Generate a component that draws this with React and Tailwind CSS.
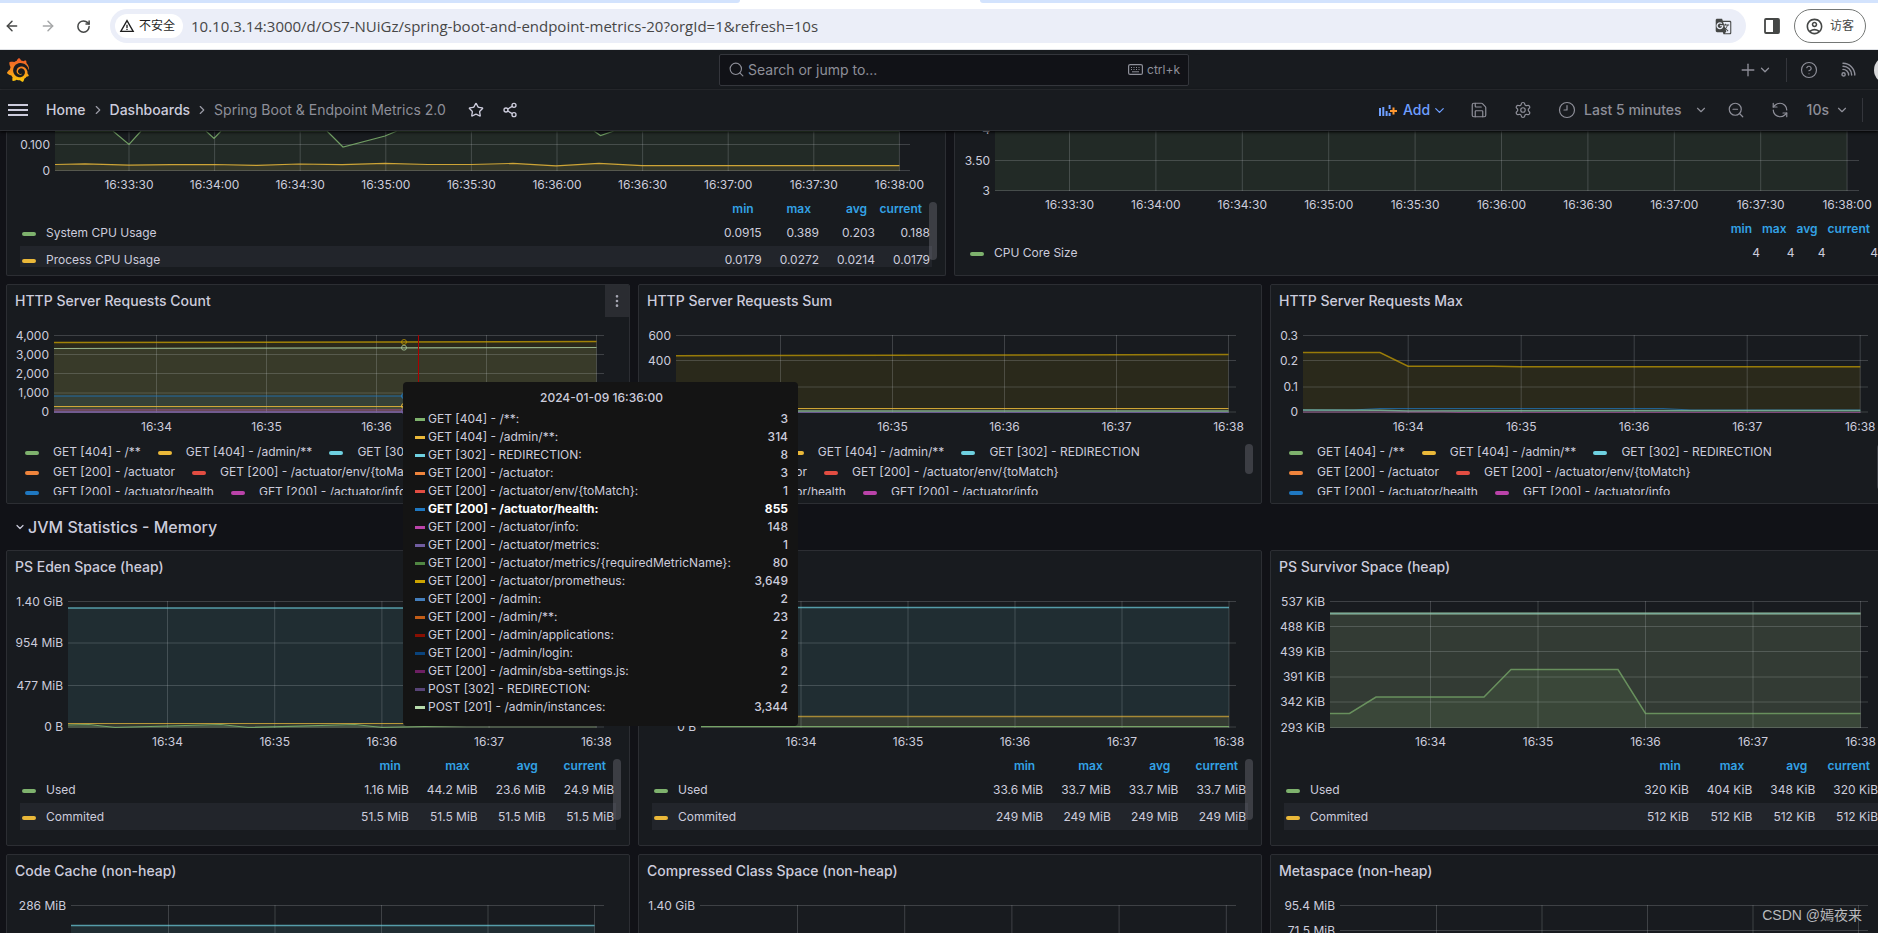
import React from "react";
import { ArrowLeft, ArrowRight, RotateCw, ChevronDown, ChevronRight, Star, Share2, Plus, Save, Settings, Clock3, ZoomOut, RefreshCw, Search, CircleHelp, EllipsisVertical } from "lucide-react";
import { SiGrafana } from "react-icons/si";
import { MdGTranslate, MdOutlineAccountCircle, MdWarningAmber } from "react-icons/md";

const GREEN = "#7eb26d";
const ORANGE = "#eab839";
const CYAN = "#6ed0e0";
const OCHRE = "#cca300";
const GRID = "rgba(214,220,224,0.2)";

const minutes = ["16:34", "16:35", "16:36", "16:37", "16:38"];
const halfMinutes = ["16:33:30", "16:34:00", "16:34:30", "16:35:00", "16:35:30", "16:36:00", "16:36:30", "16:37:00", "16:37:30", "16:38:00"];

const legendSeries = [
  [["#7eb26d", "GET [404] - /**"], ["#eab839", "GET [404] - /admin/**"], ["#6ed0e0", "GET [302] - REDIRECTION"]],
  [["#ef843c", "GET [200] - /actuator"], ["#e24d42", "GET [200] - /actuator/env/{toMatch}"]],
  [["#1f78c1", "GET [200] - /actuator/health"], ["#ba43a9", "GET [200] - /actuator/info"]],
];

const tooltipRows = [
  ["#7eb26d", "GET [404] - /**:", "3"],
  ["#eab839", "GET [404] - /admin/**:", "314"],
  ["#6ed0e0", "GET [302] - REDIRECTION:", "8"],
  ["#ef843c", "GET [200] - /actuator:", "3"],
  ["#e24d42", "GET [200] - /actuator/env/{toMatch}:", "1"],
  ["#1f78c1", "GET [200] - /actuator/health:", "855", true],
  ["#ba43a9", "GET [200] - /actuator/info:", "148"],
  ["#705da0", "GET [200] - /actuator/metrics:", "1"],
  ["#508642", "GET [200] - /actuator/metrics/{requiredMetricName}:", "80"],
  ["#cca300", "GET [200] - /actuator/prometheus:", "3,649"],
  ["#447ebc", "GET [200] - /admin:", "2"],
  ["#c15c17", "GET [200] - /admin/**:", "23"],
  ["#890f02", "GET [200] - /admin/applications:", "2"],
  ["#0a437c", "GET [200] - /admin/login:", "8"],
  ["#6d1f62", "GET [200] - /admin/sba-settings.js:", "2"],
  ["#584477", "POST [302] - REDIRECTION:", "2"],
  ["#b7dbab", "POST [201] - /admin/instances:", "3,344"],
];

/* Horizontal line series from the plot's left edge to the last tick */
const flat = (y, end) => [[0, y], [end, y]];

function Chart({ labelWidth, right = "pr-[25px]", w, h, yTicks, xStart, xStep, xLabels, series, children }) {
  const xs = xLabels.map((_, i) => xStart + i * xStep);
  return (
    <div className={`flex ${right}`}>
      <div className={`relative shrink-0 ${labelWidth}`}>
        {yTicks.map(([label, y]) => (
          <span key={label} className="absolute right-[5px] -translate-y-1/2 whitespace-nowrap text-xs leading-4" style={{ top: y }}>
            {label}
          </span>
        ))}
      </div>
      <div className="min-w-0 flex-1">
        <svg className="block w-full overflow-visible" height={h} viewBox={`0 0 ${w} ${h}`} preserveAspectRatio="none">
          {series.map((s, i) => {
            const line = s.points.map((p) => p.join(",")).join(" ");
            const last = s.points[s.points.length - 1][0];
            return <polygon key={i} points={`0,${h} ${line} ${last},${h}`} fill={s.color} fillOpacity={s.fill || 0.1} />;
          })}
          {yTicks.map(([label, y]) => y >= 0 && (
            <line key={label} x1="0" x2={w} y1={y} y2={y} stroke={GRID} />
          ))}
          {xs.map((x) => (
            <line key={x} x1={x} x2={x} y1="0" y2={h} stroke={GRID} />
          ))}
          {series.map((s, i) => (
            <polyline key={i} points={s.points.map((p) => p.join(",")).join(" ")} fill="none" stroke={s.color} strokeOpacity={s.opacity || 0.85} strokeWidth={s.width || 1.2} />
          ))}
          {children}
        </svg>
        <div className="relative h-[27px]">
          {xLabels.map((label, i) => (
            <span key={label} className="absolute top-[6px] -translate-x-1/2 text-xs leading-4" style={{ left: `${(xs[i] / w) * 100}%` }}>
              {label}
            </span>
          ))}
        </div>
      </div>
    </div>
  );
}

function Swatch({ color }) {
  return <span className="mt-0.5 block h-1 w-3.5 shrink-0 rounded-sm" style={{ backgroundColor: color }} />;
}

function LegendTable({ rows }) {
  return (
    <div className="px-[13px]">
      <table className="w-full text-xs">
        <thead>
          <tr className="h-[21px] text-[#33a2e5]">
            <th className="w-full" aria-label="series" />
            {["min", "max", "avg", "current"].map((t) => (
              <th key={t} className="py-0 pr-[10px] text-right font-semibold">{t}</th>
            ))}
          </tr>
        </thead>
        <tbody>
          {rows.map(([color, name, ...values], i) => (
            <tr key={name} className={i % 2 ? "h-[27px] bg-[#22252b]" : "h-[27px]"}>
              <td className="pl-[2px]">
                <div className="flex items-center gap-2.5">
                  <Swatch color={color} />
                  <span>{name}</span>
                </div>
              </td>
              {values.map((v, j) => (
                <td key={j} className="whitespace-nowrap pl-4 pr-[2px] text-right">{v}</td>
              ))}
            </tr>
          ))}
        </tbody>
      </table>
    </div>
  );
}

function LegendList() {
  return (
    <ul className="mt-[2px] h-[53px] overflow-hidden pl-[18px] text-xs">
      {legendSeries.map((row, i) => (
        <li key={i} className="flex h-5 items-center gap-[17px]">
          {row.map(([color, name]) => (
            <span key={name} className="flex items-center gap-3.5 whitespace-nowrap">
              <Swatch color={color} />
              {name}
            </span>
          ))}
        </li>
      ))}
    </ul>
  );
}

function ScrollThumb({ place }) {
  return <div className={`absolute right-2 w-2 rounded-full bg-[#ccccdc]/20 ${place}`} />;
}

function Panel({ title, menu, className, children }) {
  return (
    <section className={`relative overflow-hidden rounded-xs border border-[#2c2e33] bg-[#181b1f] ${className}`}>
      {title && (
        <header className="mb-[18px] flex h-8 items-center justify-between pl-2">
          <h2 className="text-sm font-medium">{title}</h2>
          {menu && (
            <button aria-label="Panel menu" className="flex h-8 w-6 items-center justify-center bg-[#2a2c31] text-[#a5a6b2]">
              <EllipsisVertical size={16} />
            </button>
          )}
        </header>
      )}
      {children}
    </section>
  );
}

function BrowserBar() {
  return (
    <div className="shrink-0 bg-white text-[#454746]">
      <div className="flex h-[3px] bg-white">
        <div className="w-[740px] rounded-br-md bg-[#d3e3fd]" />
        <div className="w-[240px]" />
        <div className="flex-1 rounded-bl-md bg-[#d3e3fd]" />
      </div>
      <div className="flex h-[47px] items-center border-b border-[#dfe1e5] pr-3">
        <div className="flex w-[110px] items-center gap-5 pl-1">
          <button aria-label="Back"><ArrowLeft size={16} strokeWidth={2.2} /></button>
          <button aria-label="Forward" className="text-[#a5a7a8]"><ArrowRight size={16} strokeWidth={2.2} /></button>
          <button aria-label="Reload"><RotateCw size={15} strokeWidth={2.4} /></button>
        </div>
        <div className="flex h-[34px] flex-1 items-center rounded-full bg-[#ebeef8] pl-[5px] pr-3.5">
          <span className="flex h-6 w-[68px] shrink-0 items-center gap-1 rounded-full bg-white pl-1 font-['Inter','Noto_Sans_CJK_SC',sans-serif] text-xs text-[#1f1f1f]">
            <MdWarningAmber size={16} />不安全
          </span>
          <input aria-label="Address" readOnly defaultValue="10.10.3.14:3000/d/OS7-NUiGz/spring-boot-and-endpoint-metrics-20?orgId=1&refresh=10s" className="min-w-0 flex-1 bg-transparent pl-2 font-['Open_Sans',sans-serif] text-[15px] leading-5 text-[#474747] outline-none" />
          <button aria-label="Translate"><MdGTranslate size={17} /></button>
        </div>
        <button aria-label="Side panel" className="ml-[18px] mr-[14px]">
          <svg width="16" height="16" viewBox="0 0 16 16"><rect x="1" y="1" width="14" height="14" rx="1" fill="none" stroke="#454746" strokeWidth="1.8" /><rect x="9" y="1" width="6" height="14" fill="#454746" /></svg>
        </button>
        <button className="flex h-[34px] w-[72px] items-center gap-1.5 rounded-full border border-[#747775] pl-2.5 font-['Inter','Noto_Sans_CJK_SC',sans-serif] text-xs">
          <MdOutlineAccountCircle size={19} />访客
        </button>
      </div>
    </div>
  );
}

function TopBar() {
  return (
    <div className="relative flex h-10 shrink-0 items-center justify-center border-b border-[#2c2e33] bg-[#181b1f] text-[#8e8f99]">
      <svg width="0" height="0" className="absolute">
        <defs>
          <linearGradient id="flame" x1="0" y1="0" x2="0" y2="1">
            <stop offset="0" stopColor="#f05a28" />
            <stop offset="0.5" stopColor="#f58a1f" />
            <stop offset="1" stopColor="#fbca0a" />
          </linearGradient>
        </defs>
      </svg>
      <div className="flex flex-1 items-center pl-1.5">
        <a href="#home" aria-label="Grafana"><SiGrafana size={24} fill="url(#flame)" /></a>
      </div>
      <label className="flex h-8 w-[470px] items-center rounded-xs border border-[#34363c] bg-[#111217] px-2">
        <Search size={17} strokeWidth={1.6} />
        <input aria-label="Search or jump to" placeholder="Search or jump to..." className="ml-[3px] min-w-0 flex-1 bg-transparent text-sm outline-none placeholder:text-[#8e8f99]" />
        <svg width="15" height="11" viewBox="0 0 15 11" fill="none" stroke="currentColor">
          <rect x="0.6" y="0.6" width="13.8" height="9.8" rx="1.5" strokeWidth="1.2" />
          <path d="M3 3.5h1M5.5 3.5h1M8 3.5h1M10.5 3.5h1M3 5.5h1M5.5 5.5h1M8 5.5h1M10.5 5.5h1M4 7.8h7" />
        </svg>
        <span className="ml-1 text-xs">ctrl+k</span>
      </label>
      <div className="-mr-6 flex flex-1 items-center justify-end">
        <button aria-label="New" className="flex items-center"><Plus size={20} strokeWidth={1.6} /><ChevronDown size={14} strokeWidth={2.2} /></button>
        <span className="ml-[14px] h-6 border-l border-[#34363c]" />
        <button aria-label="Help" className="ml-[13px]"><CircleHelp size={18} strokeWidth={1.6} /></button>
        <button aria-label="News" className="ml-[23px]">
          <svg width="15" height="15" viewBox="0 0 15 15" fill="none" stroke="currentColor" strokeWidth="1.4" strokeLinecap="round">
            <circle cx="2.6" cy="12.4" r="1.6" />
            <path d="M2 7.4a5.6 5.6 0 0 1 5.6 5.6M2 4.3a8.7 8.7 0 0 1 8.7 8.7M2 1.2A11.8 11.8 0 0 1 13.8 13" />
          </svg>
        </button>
        <span className="ml-[18px] size-7 rounded-full bg-[#d8d9da]" />
      </div>
    </div>
  );
}

function NavBar() {
  return (
    <nav className="z-10 flex h-[41px] shrink-0 items-center border-b border-[#2c2e33] bg-[#181b1f] pl-2 text-sm shadow-[0_1px_3px_#000]">
      <button aria-label="Menu">
        <svg width="20" height="14" viewBox="0 0 20 14" stroke="#ccccdc" strokeWidth="2"><path d="M0 2h20M0 7h20M0 12h20" /></svg>
      </button>
      <a href="#home" className="ml-[18px] font-medium">Home</a>
      <ChevronRight size={14} className="mx-[5px] text-[#9a9ba6]" />
      <a href="#dashboards" className="font-medium">Dashboards</a>
      <ChevronRight size={14} className="mx-[5px] text-[#9a9ba6]" />
      <span className="text-[#8e8f99]">Spring Boot &amp; Endpoint Metrics 2.0</span>
      <button aria-label="Mark as favorite" className="ml-[22px]"><Star size={16} /></button>
      <button aria-label="Share" className="ml-[18px]"><Share2 size={16} /></button>
      <div className="-mr-1 ml-auto flex items-center font-medium text-[#8e8f99]">
        <button className="flex items-center text-[#6e9fff]">
          <svg width="18" height="13" viewBox="0 0 18 13" fill="#6e9fff">
            <path d="M0 4h2v8H0zM3.3 3h2v9h-2zM6.6 7h2v5h-2zM9.6 1h2v4h-2zM9.6 9h2v3h-2z" />
            <path d="M13.5 3.5h2V6H18v2h-2.5v2.5h-2V8H11V6h2.500z" fill="#ff9830" />
          </svg>
          <span className="ml-1.5">Add</span>
          <ChevronDown size={15} className="ml-[2px]" />
        </button>
        <button aria-label="Save dashboard" className="ml-[23px]"><Save size={18} strokeWidth={1.6} /></button>
        <button aria-label="Dashboard settings" className="ml-[26px]"><Settings size={18} strokeWidth={1.6} /></button>
        <button className="ml-[26px] flex items-center"><Clock3 size={18} strokeWidth={1.6} className="-scale-x-100" /><span className="ml-2">Last 5 minutes</span><ChevronDown size={14} className="ml-3" /></button>
        <button aria-label="Zoom out" className="ml-[19px]"><ZoomOut size={18} strokeWidth={1.6} /></button>
        <button aria-label="Refresh" className="ml-[26px]"><RefreshCw size={18} strokeWidth={1.6} className="-scale-x-100" /></button>
        <button className="ml-[18px] flex items-center">10s<ChevronDown size={14} className="ml-[6px]" /></button>
        <span className="ml-[13px] h-6 w-5 border-l border-[#34363c]" />
      </div>
    </nav>
  );
}

function Tooltip() {
  return (
    <div role="tooltip" className="absolute left-[403px] top-[251px] z-20 h-[344px] w-[395px] rounded-sm bg-[#141414] pl-3 pr-2.5 pt-[7px] text-xs">
      <p className="mb-1 text-center font-medium leading-[17px]">2024-01-09 16:36:00</p>
      <table className="w-full">
        <tbody>
          {tooltipRows.map(([color, name, value, active]) => (
            <tr key={name} className={active ? "h-[18px] font-bold text-white" : "h-[18px]"}>
              <td>
                <div className="flex items-center gap-[3px] leading-[18px]">
                  <span className="h-[3px] w-2.5" style={{ backgroundColor: color }} />
                  {name}
                </div>
              </td>
              <td className={active ? "text-right leading-[18px]" : "text-right font-medium leading-[18px]"}>{value}</td>
            </tr>
          ))}
        </tbody>
      </table>
    </div>
  );
}

const requestScale = (labels) => labels.map((l, i) => [l, [0.5, 25.5, 52, 77][i]]);

export default function App() {
  return (
    <div className="flex h-screen flex-col overflow-hidden bg-[#111217] font-['Inter',sans-serif] text-[#ccccdc]">
      <BrowserBar />
      <TopBar />
      <NavBar />
      <main className="relative -mr-4 flex min-h-0 flex-1 flex-col overflow-hidden pl-1.5">
        <div className="grid h-[145px] shrink-0 grid-cols-2 gap-2">
          <Panel className="border-t-0">
            <Chart
              labelWidth="w-[48px]" right="pr-[35px]" w={855} h={40} xStart={74} xStep={85.6} xLabels={halfMinutes}
              yTicks={[["0.100", 13.5], ["0", 39.5]]}
              series={[
                { color: GREEN, points: [[0, 0], [58, 0], [74, 13.5], [86, 0], [151, 0], [159, 7.5], [166, 0], [272, 0], [288, 16], [330, 5], [342, 0], [539, 0], [545.5, 4.5], [559, 0], [844.4, 0]] },
                { color: ORANGE, points: [[0, 33.5], [30, 32.8], [74, 34.2], [116, 33.7], [159, 33.5], [202, 34.4], [244, 33], [287, 33.7], [330, 32.4], [373, 33.5], [416, 33.5], [458, 32.4], [501, 34.8], [544, 32.4], [587, 34.6], [844.4, 34.6]] },
              ]}
            />
            <div className="h-[69px] overflow-hidden">
              <LegendTable rows={[[GREEN, "System CPU Usage", "0.0915", "0.389", "0.203", "0.188"], [ORANGE, "Process CPU Usage", "0.0179", "0.0272", "0.0214", "0.0179"]]} />
            </div>
            <ScrollThumb place="top-[71px] h-[58px]" />
          </Panel>
          <Panel className="border-t-0">
            <Chart
              labelWidth="w-[40px]" right="pr-[34px]" w={864} h={60} xStart={74.5} xStep={86.4} xLabels={halfMinutes}
              yTicks={[["4", -1], ["3.50", 29.5], ["3", 59.5]]}
              series={[{ color: GREEN, points: [[0, -2], [852, -2]] }]}
            />
            <LegendTable rows={[[GREEN, "CPU Core Size", "4", "4", "4", "4"]]} />
          </Panel>
        </div>

        <div className="mt-2 grid h-[220px] shrink-0 grid-cols-3 gap-2">
          <Panel title="HTTP Server Requests Count" menu>
            <Chart
              labelWidth="w-[47px]" w={550} h={78} xStart={102.5} xStep={110} xLabels={minutes}
              yTicks={[["4,000", 0.5], ["3,000", 19.5], ["2,000", 38.5], ["1,000", 58], ["0", 77]]}
              series={[
                { color: OCHRE, points: [[0, 7.5], [542.5, 6.5]], width: 1.5, opacity: 0.75 },
                { color: "#b7dbab", points: [[0, 13.5], [542.5, 12.5]], opacity: 0.75 },
                { color: "#1f78c1", points: flat(61, 542.5), width: 1.5, opacity: 0.55 },
                { color: ORANGE, points: flat(71.5, 542.5) },
                { color: "#ba43a9", points: flat(74.5, 542.5), fill: 0.3, opacity: 0.3 },
                { color: "#705da0", points: flat(77, 542.5), width: 2, opacity: 0.7 },
              ]}
            >
              <line x1="364.5" x2="364.5" y1="0" y2="78" stroke="#aa0000" />
              <circle cx="350" cy="7" r="2.5" fill="none" stroke={OCHRE} strokeOpacity="0.7" />
              <circle cx="350" cy="12.7" r="2.5" fill="none" stroke="#b7dbab" strokeOpacity="0.7" />
              <circle cx="350" cy="61" r="2.5" fill="none" stroke="#1f78c1" />
              <circle cx="350" cy="71" r="2.5" fill="none" stroke={ORANGE} />
              <circle cx="350" cy="76" r="2.5" fill="none" stroke="#705da0" />
            </Chart>
            <LegendList />
          </Panel>
          <Panel title="HTTP Server Requests Sum">
            <Chart
              labelWidth="w-[37px]" w={560} h={78} xStart={104.5} xStep={112} xLabels={minutes}
              yTicks={requestScale(["600", "400", "200", "0"])}
              series={[
                { color: OCHRE, points: [[0, 20.7], [552.5, 19.5]], opacity: 0.7, width: 1.5 },
                { color: ORANGE, points: flat(73.5, 552.5) },
                { color: "#7fb59a", points: flat(76, 552.5), width: 1.5 },
                { color: "#705da0", points: flat(77.5, 552.5) },
              ]}
            />
            <LegendList />
            <ScrollThumb place="top-[159px] h-[30px]" />
          </Panel>
          <Panel title="HTTP Server Requests Max">
            <Chart
              labelWidth="w-[32px]" w={565} h={78} xStart={105.2} xStep={113} xLabels={minutes}
              yTicks={requestScale(["0.3", "0.2", "0.1", "0"])}
              series={[
                { color: OCHRE, points: [[0, 17.5], [77, 17.5], [105, 31.2], [190, 31.2], [218, 31.8], [557.3, 31.8]], opacity: 0.7, width: 1.5 },
                { color: "#1f78c1", points: [[0, 75], [50, 75], [77, 73.5], [360, 73.5], [388, 75], [557.3, 75]], opacity: 0.7 },
                { color: "#7fb59a", points: [[0, 75], [77, 75.3], [105, 76], [557.3, 75.5]], width: 1.5 },
                { color: "#ba43a9", points: [[0, 77], [140, 77], [155, 77.5], [557.3, 77.5]], opacity: 0.5 },
              ]}
            />
            <LegendList />
            <ScrollThumb place="top-[159px] h-[46px]" />
          </Panel>
        </div>

        <button className="flex h-[46px] shrink-0 items-center gap-[2px] pl-2 text-base font-medium">
          <ChevronDown size={12} strokeWidth={2.4} />
          JVM Statistics - Memory
        </button>

        <div className="grid h-[296px] shrink-0 grid-cols-3 gap-2">
          <Panel title="PS Eden Space (heap)">
            <Chart
              labelWidth="w-[61px]" w={536} h={127} xStart={99.5} xStep={107.2} xLabels={minutes}
              yTicks={[["1.40 GiB", 0.5], ["954 MiB", 42], ["477 MiB", 84.5], ["0 B", 126]]}
              series={[
                { color: CYAN, points: flat(7, 528.3), opacity: 0.7, width: 1.5 },
                { color: ORANGE, points: flat(122.5, 528.3), opacity: 0.75 },
                { color: GREEN, points: [[0, 124], [21, 123.5], [47, 126.5], [153, 123.5], [180, 126.5], [287, 123.5], [314, 126.5], [421, 124], [528.3, 124]] },
              ]}
            />
            <LegendTable rows={[[GREEN, "Used", "1.16 MiB", "44.2 MiB", "23.6 MiB", "24.9 MiB"], [ORANGE, "Commited", "51.5 MiB", "51.5 MiB", "51.5 MiB", "51.5 MiB"]]} />
            <ScrollThumb place="top-[208px] h-[61px]" />
          </Panel>
          <Panel title="PS Old Gen (heap)">
            <Chart
              labelWidth="w-[62px]" w={535} h={127} xStart={100} xStep={107} xLabels={minutes}
              yTicks={[["1.40 GiB", 0.5], ["954 MiB", 42], ["477 MiB", 84.5], ["0 B", 126]]}
              series={[
                { color: CYAN, points: flat(6.5, 528), opacity: 0.7, width: 1.5 },
                { color: ORANGE, points: flat(115.5, 528), opacity: 0.65, width: 1.5 },
                { color: GREEN, points: flat(125.5, 528) },
              ]}
            />
            <LegendTable rows={[[GREEN, "Used", "33.6 MiB", "33.7 MiB", "33.7 MiB", "33.7 MiB"], [ORANGE, "Commited", "249 MiB", "249 MiB", "249 MiB", "249 MiB"]]} />
            <ScrollThumb place="top-[208px] h-[61px]" />
          </Panel>
          <Panel title="PS Survivor Space (heap)">
            <Chart
              labelWidth="w-[59px]" w={538} h={127} xStart={100.5} xStep={107.5} xLabels={minutes}
              yTicks={[["537 KiB", 0.5], ["488 KiB", 25.5], ["439 KiB", 50.5], ["391 KiB", 76], ["342 KiB", 101], ["293 KiB", 126.5]]}
              series={[
                { color: ORANGE, points: flat(12.5, 530.5), opacity: 0.5, width: 2 },
                { color: CYAN, points: flat(12.5, 530.5), opacity: 0.6, width: 2 },
                { color: GREEN, points: [[0, 112.5], [19.5, 112.5], [46, 96], [154, 96], [181, 68.5], [288, 68.5], [315.5, 112.5], [530.5, 112.5]], opacity: 0.7, width: 1.5 },
              ]}
            />
            <LegendTable rows={[[GREEN, "Used", "320 KiB", "404 KiB", "348 KiB", "320 KiB"], [ORANGE, "Commited", "512 KiB", "512 KiB", "512 KiB", "512 KiB"]]} />
          </Panel>
        </div>

        <div className="mt-2 grid h-[296px] shrink-0 grid-cols-3 gap-2">
          <Panel title="Code Cache (non-heap)">
            <Chart labelWidth="w-[64px]" w={533} h={127} xStart={97.5} xStep={106.5} xLabels={minutes} yTicks={[["286 MiB", 0.5]]} series={[{ color: CYAN, points: flat(20.5, 523.5), opacity: 0.7, width: 1.5 }]} />
          </Panel>
          <Panel title="Compressed Class Space (non-heap)">
            <Chart labelWidth="w-[61px]" w={536} h={127} xStart={97.5} xStep={107.2} xLabels={minutes} yTicks={[["1.40 GiB", 0.5]]} series={[]} />
          </Panel>
          <Panel title="Metaspace (non-heap)">
            <Chart labelWidth="w-[69px]" w={528} h={127} xStart={96.5} xStep={105.5} xLabels={minutes} yTicks={[["95.4 MiB", 0.5], ["71.5 MiB", 25.5]]} series={[]} />
          </Panel>
        </div>

        <Tooltip />
        <p className="absolute bottom-1.5 right-8 z-20 font-['Liberation_Sans','Noto_Sans_CJK_SC',sans-serif] text-sm leading-6 text-[#b9babd]">CSDN @嫣夜来</p>
      </main>
    </div>
  );
}
